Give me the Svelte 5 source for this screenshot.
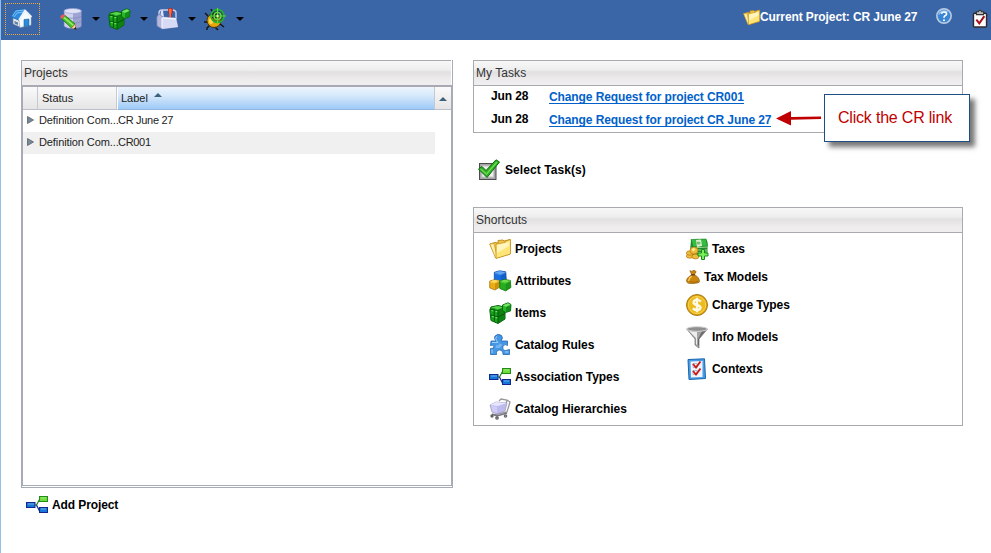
<script>
  const tools = ['database', 'items', 'toolbox', 'bug'];
  const rows = [
    { status: 'Definition Com...', label: 'CR June 27' },
    { status: 'Definition Com...', label: 'CR001' }
  ];
  const tasks = [
    { date: 'Jun 28', title: 'Change Request for project CR001' },
    { date: 'Jun 28', title: 'Change Request for project CR June 27' }
  ];
  const left = [
    ['folder', 'Projects'],
    ['attributes', 'Attributes'],
    ['items', 'Items'],
    ['puzzle', 'Catalog Rules'],
    ['nodes', 'Association Types'],
    ['cart', 'Catalog Hierarchies']
  ];
  const right = [
    ['taxes', 'Taxes'],
    ['bag', 'Tax Models'],
    ['coin', 'Charge Types'],
    ['funnel', 'Info Models'],
    ['contexts', 'Contexts']
  ];
</script>

{#snippet cube(x, y, s, top, side, dark)}
  <g transform="translate({x} {y}) scale({s})">
    <path d="M.8 2 6 .5 12 1.500 12.500 9 7 12.500 .8 10Z" fill={side} stroke={dark} stroke-width=".8" stroke-linejoin="round" />
    <path d="M1 2.200 6 .8 12 1.800 7 4Z" fill={top} />
    <path d="M7 4 12 1.800V9L7 12.200Z" fill={dark} opacity=".4" />
    <path d="M1.500 3 7 4.500 12 2" fill="none" stroke={top} stroke-width=".6" />
  </g>
{/snippet}

{#snippet icon(name, size = 22)}
  <svg class="icon" width={size} height={size} viewBox="0 0 22 22" aria-hidden="true">
    {#if name === 'home'}
      <path d="M3 9 10 13V19L3 16Z" fill="#dce6ef" stroke="#7a8798" stroke-width=".6" />
      <path d="M9 12 15 3 21 9V17L10 19.500Z" fill="#f8fbfe" stroke="#a3afbd" stroke-width=".6" />
      <path d="M.8 9 5 2 15 1 9 12Z" fill="#2e8ade" stroke="#1565b3" stroke-width=".7" />
      <path d="M2.500 8 6 3 14 2M4 9 7 5 13 4" fill="none" stroke="#7ec2f5" />
      <path d="M9 12 15 2.500 21.500 9" fill="none" stroke="#e6f2fc" stroke-width="1.800" />
      <path d="M14 11.500 19 11V17.500L14 18.500Z" fill="#2b8bda" stroke="#1765a5" stroke-width=".6" />
      <path d="M4.500 13 8 14.500V17L4.500 15.500Z" fill="#647f9c" />
    {:else if name === 'database'}
      <path d="M4 3V18C5 21.500 20 21.500 21.500 18V3Z" fill="#9ea4d2" stroke="#7179bd" stroke-width=".7" />
      <path d="M4.500 4V18Q8 20.500 13 20.300V5Z" fill="#cfd2ec" />
      <ellipse cx="12.700" cy="3" rx="8.700" ry="2.500" fill="#dfe1f4" stroke="#9aa0d2" stroke-width=".7" />
      <path d="M4 8C6 11 19 11 21.500 8M4 13C6 16 19 16 21.500 13" fill="none" stroke="#8389bd" stroke-width=".8" />
      <path d="M1.500 10.500 5 7.500 15 16 11.500 20Z" fill="#4fc32c" stroke="#16780e" stroke-width=".9" />
      <path d="M4 9.500 13.500 17.500" stroke="#a0ef72" stroke-width="1.400" />
      <path d="M15 16 16 21.500 11.500 20Z" fill="#f5d79b" stroke="#8a642d" stroke-width=".5" />
      <path d="m13.500 21 3 .8-.7-2.800Z" fill="#222" />
      <path d="M.5 10Q0 6 4.500 6.500L5.500 7.500 2 11Z" fill="#e85c57" />
    {:else if name === 'items'}
      <path d="M.8 8 2 5 9 3.500 15 5V8L16 10V17L9 21.500 2 18.500Z" fill="#17a41c" stroke="#07630c" />
      <path d="M2 5.500 8.500 4 14.500 5.500 9 7.500Z" fill="#5ad34c" />
      <path d="M9 7.500 15 5.500 16 10 15.500 17 9 21Z" fill="#08700e" opacity=".65" />
      <path d="M1 7 9 9M2 13 9 15 16 11.500M9 8V21M5 6.500 5.500 19.500" fill="none" stroke="#075c0b" stroke-width="1.100" />
      <path d="M2.500 8.500 4.500 9M6.500 9.300 8.300 9.700M3 14.300 5 15M6.500 15.300 8.300 15.800" stroke="#67e65d" stroke-width="1.200" />
      <path d="M13.500 3 19 .8 22 2.500 21.500 9 16.500 10.500 13.500 8.500Z" fill="#28b728" stroke="#07630c" stroke-width=".9" />
      <path d="M14 3.300 19 1.300 21.500 2.700 17 5Z" fill="#75e367" />
      <path d="M17 5 21.700 3V8.500L17 10Z" fill="#0a7d12" opacity=".7" />
    {:else if name === 'toolbox'}
      <path d="M3 8V5Q3 2 6 2H16Q20 2 20 5V11" fill="none" stroke="#cdd1ef" stroke-width="1.400" />
      <path d="M4 10 5 3 7 2 8 10Z" fill="#dde0f6" />
      <path d="M12.500 1Q14.500-1 16.500 1V4L15.500 6V11H13.500V6L12.500 4Z" fill="#f34727" stroke="#9c1e15" stroke-width=".6" />
      <path d="M14 1V10" stroke="#ffad83" stroke-width=".8" />
      <path d="M.8 9 3 6 7 9 20 10 22 19 6 21 1 18Z" fill="#b4b8dd" stroke="#777eae" stroke-width=".7" />
      <path d="M6 9 20 10 22 19 6 21Z" fill="#d7daf4" />
      <path d="M6 10V20M7 10 20 11" stroke="#f8f9ff" />
    {:else if name === 'bug'}
      <path d="M5 9 1 5M4 14H0M6 17 3 20V22M11 19 14 22M16 16 20 19M9 5 7 1" fill="none" stroke="#151515" stroke-width="1.500" />
      <ellipse cx="10" cy="12.500" rx="7" ry="7" fill="#eaa50b" stroke="#4e3907" />
      <path d="M5 7Q9 3 14 6L12 11Q8 11 5 7Z" fill="#292b22" />
      <ellipse cx="7" cy="13" rx="2" ry="3" fill="#ffdc52" />
      <circle cx="13.500" cy="8" r="6.500" fill="#17491a" fill-opacity=".55" stroke="#24b22d" stroke-width="1.600" />
      <circle cx="13.500" cy="8" r="3.500" fill="none" stroke="#75e855" stroke-width="1.200" />
      <path d="M13.500 0V16M5.500 8H22" stroke="#58dc3b" stroke-width="1.200" />
      <circle cx="13.500" cy="8" r="1.200" fill="#d3ff9a" />
    {:else if name === 'folder'}
      <path d="M.8 6 6 4.500 9 5V2.500L14 2 15 3 21 1.500V16L7 20Z" fill="#f0c750" stroke="#c28e20" />
      <path d="M.8 6 5 5.500 8 18 6.500 20Z" fill="#fff0a5" stroke="#c28c1c" stroke-width=".6" />
      <path d="M7 6 16 4.500 17 3 21.500 1.500V16L7 20.500Z" fill="#ffe577" stroke="#c28e20" stroke-width=".8" />
      <path d="M8 7 20 4V8L8 15Z" fill="#fff8c9" opacity=".85" />
    {:else if name === 'attributes'}
      {@render cube(4.5, .3, 1.02, '#64a6f1', '#176ee0', '#0b49a7')}
      {@render cube(0, 9.3, .86, '#ffdf63', '#edad12', '#9c6b0b')}
      {@render cube(10, 9, .95, '#71df4d', '#26ad20', '#12740e')}
    {:else if name === 'puzzle'}
      <path d="M2 7H7Q4.500 4 6 2Q9-1 12.500 1.500Q14.500 4 12 7H18.500V11.500Q16 9.500 14 12Q13 16.500 16.500 16.500L20.500 15.500V20.500H14Q14 16 10.500 16Q7 16 7.500 20.500H1.500V14.500Q5 15 5 12.500Q4 10.500 1.500 11.500Z" fill="#4597e6" stroke="#2267ad" stroke-width=".8" />
      <path d="M3 8.500H9Q5 4 8 2.500M3 19V15.500M16 18H19.500" fill="none" stroke="#a0d0fa" />
      <path d="M7 12Q10 14 12 10" stroke="#72b4f2" stroke-width="3" fill="none" />
    {:else if name === 'nodes'}
      <path d="M9 11H10.500L13.500 5.500" fill="none" stroke="#207d16" stroke-width="1.200" />
      <path d="M10.500 11 13.500 17" fill="none" stroke="#142b8e" stroke-width="1.200" />
      <rect x=".5" y="8.500" width="8.500" height="5" fill="#1477da" stroke="#12268b" />
      <rect x="13.500" y="2.500" width="8" height="5" fill="#6bdd36" stroke="#238b19" />
      <rect x="13.500" y="13.500" width="8" height="5" fill="#1477da" stroke="#12268b" />
      <path d="M2 10H8M15 4H20M15 15H20" stroke="#fff" opacity=".4" />
    {:else if name === 'cart'}
      <path d="M10 3 12 1 18 2 21 4 18 14 5 17M18 2 17 6" fill="none" stroke="#98989d" stroke-width="1.300" />
      <path d="M1 7 7 4 18 5 16 13 8 16 3 14Z" fill="#bdbbed" stroke="#9895bf" stroke-width=".7" />
      <path d="M1 7 7 4 18 5 9 8Z" fill="#e7e5ff" />
      <path d="M2 7.500 8 8.500V15L3.500 13.500Z" fill="#cfccf7" />
      <path d="M3 16 8 18 18 15" fill="none" stroke="#77777d" stroke-width="1.500" />
      <circle cx="3" cy="18" r="1.700" fill="#626268" /><circle cx="8" cy="20" r="1.800" fill="#55555a" /><circle cx="16.500" cy="18" r="1.800" fill="#626268" /><circle cx="8" cy="20" r=".6" fill="#ccc" /><circle cx="16.500" cy="18" r=".6" fill="#ccc" />
    {:else if name === 'taxes'}
      <path d="M5 2 20 1 21.500 4V16L8 17 4 13Z" fill="#22882b" />
      <path d="M5 1.500 20 1 21.500 8 7 9Z" fill="#35bd42" stroke="#187e20" stroke-width=".6" />
      <path d="M5 10 21 9M6 12 21 12M7 15 21 14" stroke="#94e28c" />
      <path d="M10 2 15 1.500 16 8 11 9Z" fill="#dcebcf" /><ellipse cx="12.500" cy="5" rx="2" ry="1.500" fill="#79bd71" />
      <g fill="#efbc38" stroke="#a46b0d" stroke-width=".6"><ellipse cx="4" cy="18" rx="3.700" ry="2.200" /><ellipse cx="4" cy="15" rx="3.700" ry="2.200" /><ellipse cx="9.500" cy="18.500" rx="3.500" ry="2.500" /><ellipse cx="8" cy="12.500" rx="4" ry="3.500" /></g>
      <circle cx="7.500" cy="11.500" r="1.600" fill="#ffed8d" />
      <path d="M15.500 11.500H18.500V15H22V18H18.500V21.500H15.500V18H12V15H15.500Z" fill="#79ef5b" stroke="#188b18" />
    {:else if name === 'bag'}
      <path d="M6 1Q9 3 11 1Q15 0 16 3L13 7Q22 12 21 19Q17 22 4 21Q-1 19 2 13L9 7Z" fill="#cb860d" stroke="#835109" />
      <path d="M8 7.500H14" stroke="#5e3c12" stroke-width="2" />
      <path d="M4 17Q5 12 9 10" stroke="#ffd267" stroke-width="2" fill="none" />
      <path d="M6 18Q12 21 19 18" stroke="#965b05" fill="none" />
    {:else if name === 'coin'}
      <circle cx="11" cy="11" r="10.500" fill="#dea310" stroke="#a87b12" />
      <circle cx="11" cy="11" r="8.700" fill="#edbb20" stroke="#ffe16d" stroke-width=".7" />
      <path d="M15 7.500Q11 4.500 8 7Q6.500 10 11 11Q16 12.500 14 15Q11 17.500 6.800 14.500M11 3.800V18.200" fill="none" stroke="#fffbe8" stroke-width="2.400" />
    {:else if name === 'funnel'}
      <path d="M.7 3 9 13V19L13 22V13L21.500 3Z" fill="#a4a4a4" stroke="#717171" stroke-width=".7" />
      <path d="M3 5 10 12V18L11 19V6Z" fill="#eee" />
      <path d="M16 5 20 4 13 13V20L12 19V13Z" fill="#555" opacity=".7" />
      <ellipse cx="11" cy="3" rx="10.300" ry="2.300" fill="#8f8f8f" stroke="#d5d5d5" />
    {:else if name === 'contexts'}
      <path d="M2 1.500 18.500 .8 19.500 20.500 3 21.500Z" fill="#4a9be5" stroke="#1566af" />
      <path d="M4.500 3.500 16.500 3V19L5 19.500Z" fill="#f0f6fb" />
      <path d="M7 5.500H11V9.500H7ZM7 12.500H11V16.500H7Z" fill="#fff" stroke="#94a4b4" stroke-width=".7" />
      <path d="m7 6 3 3.500 4.500-6M7 13l3 3.500 4.500-6" fill="none" stroke="#ce1919" stroke-width="1.900" />
    {:else if name === 'check'}
      <rect x="1.500" y="4.500" width="16.500" height="16" fill="#a5a5a5" stroke="#4c4c4c" />
      <rect x="4" y="7" width="11.500" height="11" fill="#eee" stroke="#ccc" />
      <path d="M.5 10 4 7.500 8 11.500 18 .8 21.500 3 9 18.500Z" fill="#2dad24" stroke="#0d6e0d" stroke-linejoin="round" />
      <path d="M2.500 10 8.500 15 19 3" fill="none" stroke="#6fda53" stroke-width="1.400" />
    {:else if name === 'help'}
      <circle cx="11" cy="11" r="9.800" fill="#3b85d5" stroke="#b7c9df" stroke-width="2.300" />
      <path d="M4 9Q7 2 16 5" fill="none" stroke="#8dc2f2" stroke-width="2" />
      <path d="M7.500 8Q8 5.500 11 5.500Q15 5.500 14.500 8.500Q14 10 12 11Q11 12 11 13.500" fill="none" stroke="#fff" stroke-width="2.300" /><circle cx="11" cy="16.700" r="1.400" fill="#fff" />
    {:else if name === 'clipboard'}
      <rect x="2" y="3" width="18" height="19" rx="1.500" fill="#fff" stroke="#30282c" stroke-width="2" />
      <path d="M6 1H9L10-1H12L13 1H16V5H6Z" fill="#bcbcbc" stroke="#333" stroke-width="1.500" />
      <path d="m6 12 4 5 7-10" fill="none" stroke="#a5121e" stroke-width="2.800" />
    {/if}
  </svg>
{/snippet}

<div class="page">
  <header>
    <button class="home" aria-label="Home">{@render icon('home')}</button>
    {#each tools as tool}
      <div class="tool">{@render icon(tool)}<i class="caret"></i></div>
    {/each}
    <div class="current">{@render icon('folder', 17)}<span>Current Project: CR June 27</span></div>
    <div class="help">{@render icon('help', 16)}</div>
    {@render icon('clipboard', 16)}
  </header>

  <main>
    <section class="projects">
      <div class="grid">
        <div class="title">Projects</div>
        <div class="table">
          <div class="columns">
            <div class="expander"></div>
            <div class="status">Status</div>
            <div class="label">Label<i class="up"></i></div>
            <div class="last"><i class="up"></i></div>
          </div>
          {#each rows as row}
            <div class="row">
              <svg width="7" height="8" viewBox="0 0 7 8"><path d="M.5.500 6.500 4 .5 7.500Z" fill="#788a99" stroke="#56616a" stroke-width=".8" /></svg>
              <span class="state">{row.status}</span><span class="name">{row.label}</span>
            </div>
          {/each}
        </div>
      </div>
      <div class="action add">{@render icon('nodes')}<b>Add Project</b></div>
    </section>

    <section class="side">
      <div class="panel tasks">
        <div class="title">My Tasks</div>
        {#each tasks as task}
          <div class="task"><b>{task.date}</b><a href="#task">{task.title}</a></div>
        {/each}
        <div class="callout">
          <svg width="46" height="16" viewBox="0 0 46 16"><path d="M0 8.500 15 1V7L45 6.500V9L15 9.800V15.500Z" fill="#c00000" /></svg>
          <div class="note">Click the CR link</div>
        </div>
      </div>
      <div class="action select">{@render icon('check')}<b>Select Task(s)</b></div>
      <div class="panel shortcuts">
        <div class="title">Shortcuts</div>
        <div class="lists">
          <div class="list">
            {#each left as [name, text]}
              <div class="link">{@render icon(name)}<b>{text}</b></div>
            {/each}
          </div>
          <div class="list">
            {#each right as [name, text]}
              <div class="link" class:small={name === 'bag'}>{@render icon(name, name === 'bag' ? 14 : 22)}<b>{text}</b></div>
            {/each}
          </div>
        </div>
      </div>
    </section>
  </main>
</div>

<style>
  :global(body) { margin: 0; background: #fff; }
  * { box-sizing: border-box; }
  .page { width: 991px; height: 553px; overflow: hidden; border-left: 1px solid #8fc1ee; font: 12px/16px "Liberation Sans", Arial, sans-serif; color: #000; }
  .icon { display: block; flex: none; overflow: visible; }
  header { height: 40px; display: flex; align-items: center; background: #3a66a8; padding: 0 3px 2px 4px; }
  .home { width: 35px; height: 32px; padding: 0 0 0 4px; border: 1px dotted #efa93f; background: none; margin-right: 20px; }
  .tool { width: 48px; display: flex; align-items: center; gap: 10px; }
  .caret { border: 4px solid transparent; border-top-color: #000; border-bottom: 0; }
  .current { display: flex; align-items: center; margin-left: auto; color: #fff; font-weight: bold; height: 28px; }
  .current span { width: 176px; white-space: nowrap; margin-top: -4px; letter-spacing: -.1px; }
  .current :global(svg) { margin-top: -4px; }
  .help { margin: -6px 20px 0 0; }
  main { display: flex; padding: 20px 0 0 20px; }
  .projects { width: 452px; }
  .grid { width: 432px; height: 428px; display: flex; flex-direction: column; border: 1px solid #a6abb6; border-top: 0; }
  .title { height: 25px; padding: 4px 2px 0; color: #333; letter-spacing: .05px; background: linear-gradient(#f8f8f8, #ededed 38%, #e2e0e1 46%, #edebec 75%, #f0eeee); border-bottom: 1px solid #a9a9b0; }
  .grid .title { width: 429px; height: 25px; border-top: 1px solid #a9a9b0; border-bottom: 0; }
  .table { flex: 1; margin-bottom: 1px; border: 1px solid #a6abb6; border-top: 2px solid #a9a9b3; }
  .columns { display: flex; height: 23px; font-size: 11px; line-height: 22px; color: #222; }
  .columns div { background: linear-gradient(#fafafa, #e5e5e5); border-bottom: 1px solid #b9c0cb; border-right: 1px solid #c6c9d0; }
  .columns .expander { width: 15px; }
  .columns .status { width: 79px; padding-left: 4px; }
  .columns .label { width: 318px; padding-left: 3px; background: linear-gradient(#edf5fd, #d5e8fb 40%, #9ecaf6); border-bottom-color: #91b5dc; border-left: 1px solid #fff; }
  .columns .last { flex: 1; border-right: 0; }
  .up { display: inline-block; border: 4px solid transparent; border-bottom-color: #3c627b; border-top: 0; vertical-align: 5px; margin-left: 6px; }
  .last .up { vertical-align: 1px; margin-left: 4px; }
  .row { display: flex; align-items: center; height: 22px; width: 412px; padding: 0 0 2px 4px; font-size: 11px; color: #222; }
  .row + .row { background: #f0f0f0; }
  .row svg { margin-right: 5px; }
  .state { width: 79px; white-space: nowrap; letter-spacing: -.1px; }
  .name { letter-spacing: -.3px; }
  .action { display: flex; align-items: center; gap: 5px; height: 22px; }
  .add { margin: 6px 0 0 5px; gap: 4px; }
  .add b { letter-spacing: -.1px; }
  .select b { letter-spacing: .08px; }
  .side { width: 490px; }
  .panel { border: 1px solid #a9a9b0; position: relative; }
  .tasks { height: 73px; }
  .task { height: 23px; display: flex; padding: 2px 0 0 17px; }
  .task b { width: 58px; letter-spacing: -.1px; }
  .task a { height: 16px; color: #0061cb; text-decoration: none; font-weight: bold; letter-spacing: -.1px; border-bottom: 1px solid #0061cb; padding-top: 1px; }
  .callout { position: absolute; left: 302px; top: 33px; display: flex; align-items: center; }
  .note { width: 146px; height: 48px; margin-left: 2px; padding-left: 13px; border: 1px solid #1f4e83; background: #fff; color: #c00000; font-size: 16px; line-height: 46px; letter-spacing: -.2px; box-shadow: 5px 5px 5px #777; white-space: nowrap; }
  .select { margin: 26px 0 26px 5px; }
  .shortcuts { height: 219px; }
  .lists { display: flex; padding: 0 0 0 15px; }
  .list { width: 197px; }
  .link { display: flex; align-items: center; gap: 4px; height: 32px; letter-spacing: -.05px; }
  .link.small { height: 24px; }
</style>
